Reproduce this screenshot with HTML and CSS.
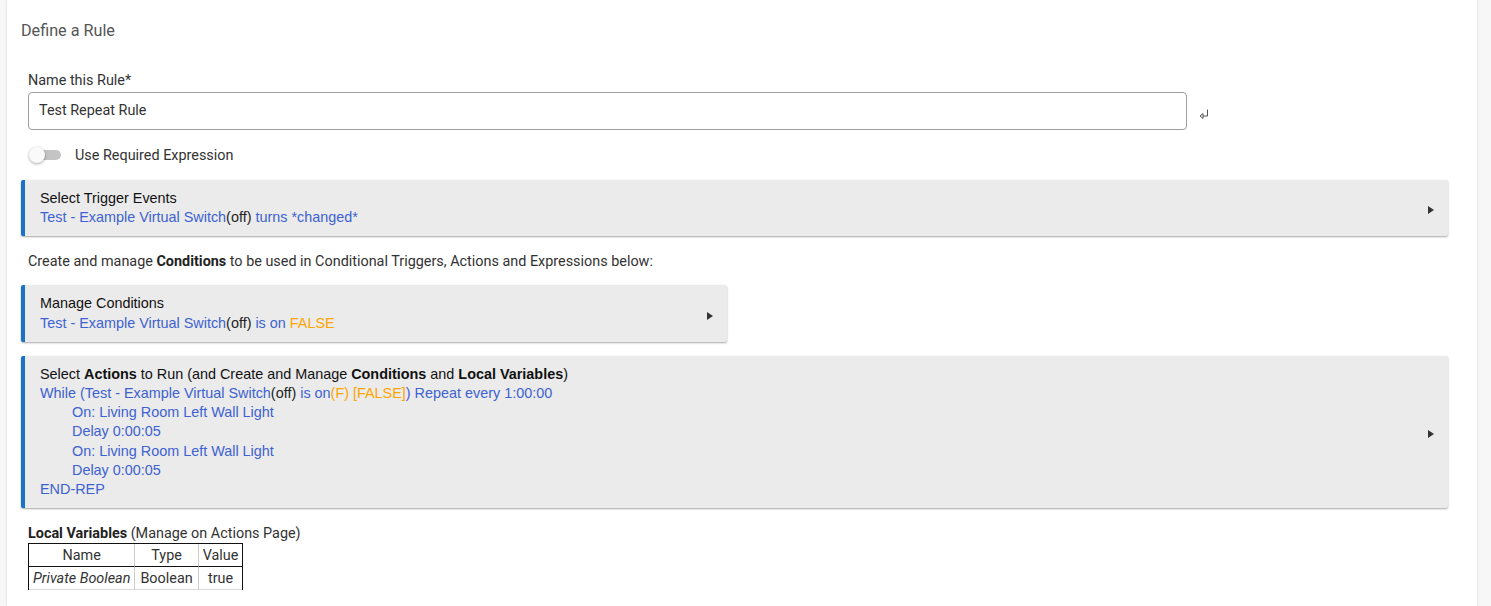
FILE: index.html
```html
<!DOCTYPE html>
<html>
<head>
<meta charset="utf-8">
<link rel="stylesheet" href="styles.css">
</head>
<body>
<div class="page">
  <div class="panel">
    <h2 class="title">Define a Rule</h2>

    <div class="field">
      <label class="label">Name this Rule*</label>
      <div class="input-row">
        <div class="input">Test Repeat Rule</div>
        <span class="enter">
          <svg width="12" height="12" viewBox="0 0 12 12"><path d="M9.5 1.5 V8 H5" fill="none" stroke="#555" stroke-width="1"/><path d="M5 5.5 L2 8 L5 10.5 Z" fill="none" stroke="#555" stroke-width="1"/></svg>
        </span>
      </div>
    </div>

    <div class="toggle-row">
      <span class="toggle"><span class="knob"></span></span>
      <span class="toggle-label">Use Required Expression</span>
    </div>

    <div class="section">
      <div class="section-text">
        <div class="head">Select Trigger Events</div>
        <div class="blue">Test - Example Virtual Switch<span class="dark">(off)</span> turns *changed*</div>
      </div>
      <span class="caret"></span>
    </div>

    <p class="note">Create and manage <b>Conditions</b> to be used in Conditional Triggers, Actions and Expressions below:</p>

    <div class="section narrow">
      <div class="section-text">
        <div class="head">Manage Conditions</div>
        <div class="blue">Test - Example Virtual Switch<span class="dark">(off)</span> is on <span class="orange">FALSE</span></div>
      </div>
      <span class="caret"></span>
    </div>

    <div class="section last">
      <div class="section-text">
        <div class="head">Select <b>Actions</b> to Run (and Create and Manage <b>Conditions</b> and <b>Local Variables</b>)</div>
        <div class="blue">While (Test - Example Virtual Switch<span class="dark">(off)</span> is on<span class="orange">(F) [FALSE]</span>) Repeat every 1:00:00</div>
        <div class="blue indent">On: Living Room Left Wall Light</div>
        <div class="blue indent">Delay 0:00:05</div>
        <div class="blue indent">On: Living Room Left Wall Light</div>
        <div class="blue indent">Delay 0:00:05</div>
        <div class="blue">END-REP</div>
      </div>
      <span class="caret"></span>
    </div>

    <div class="vars">
      <div class="vars-title"><b>Local Variables</b> (Manage on Actions Page)</div>
      <table class="vars-table">
        <tr><th>Name</th><th>Type</th><th>Value</th></tr>
        <tr><td><i>Private Boolean</i></td><td>Boolean</td><td>true</td></tr>
      </table>
    </div>
  </div>
</div>
</body>
</html>
```

FILE: styles.css
```css
html, body {
  margin: 0;
  padding: 0;
  height: 100%;
  overflow: hidden;
  background: #f7f7f7;
  font-family: Roboto, "Liberation Sans", sans-serif;
}

.page {
  display: flex;
  padding-left: 7px;
  height: 606px;
}

.panel {
  width: 1470px;
  box-sizing: border-box;
  background: #fff;
  padding: 21px 29px 0 14px;
  box-shadow: 0 0 2px rgba(0, 0, 0, 0.18);
}

.title {
  margin: 0;
  font-size: 16.2px;
  font-weight: 400;
  line-height: 20px;
  color: #555;
}

.field {
  margin: 31px 0 0 7px;
}

.label {
  display: block;
  font-size: 14.4px;
  line-height: 17px;
  color: #333;
}

.input-row {
  display: flex;
  align-items: center;
  margin-top: 3px;
}

.input {
  width: 1159px;
  height: 38px;
  box-sizing: border-box;
  border: 1px solid #9e9e9e;
  border-radius: 4px;
  padding: 0 10px;
  font-size: 14.4px;
  line-height: 36px;
  color: #333;
}

.enter {
  display: flex;
  margin: 6px 0 0 11px;
}

.toggle-row {
  display: flex;
  align-items: center;
  margin: 15px 0 0 9px;
  height: 20px;
}

.toggle {
  position: relative;
  width: 31px;
  height: 10px;
  border-radius: 5px;
  background: #c4c4c4;
}

.knob {
  position: absolute;
  left: -1px;
  top: -3px;
  width: 16px;
  height: 16px;
  border-radius: 50%;
  background: #fafafa;
  box-shadow: 0 1px 3px rgba(0, 0, 0, 0.35);
}

.toggle-label {
  margin-left: 14px;
  font-size: 14.4px;
  color: #333;
}

.section {
  display: flex;
  align-items: center;
  justify-content: space-between;
  margin-top: 15px;
  background: #ebebeb;
  border-left: 4px solid #1a73c8;
  border-radius: 2px;
  padding: 9px 14px 9px 15px;
  box-shadow: 0 1px 2px rgba(0, 0, 0, 0.35);
  font-family: "Liberation Sans", Arial, sans-serif;
  font-size: 14.4px;
  line-height: 19.2px;
}

.section.narrow {
  width: 706px;
  box-sizing: border-box;
  margin-top: 13px;
}

.section.last {
  margin-top: 14px;
}

.head {
  color: #111;
}

.blue {
  color: #3d62d2;
}

.dark {
  color: #222;
}

.orange {
  color: #ffa500;
}

.indent {
  padding-left: 32px;
}

.caret {
  width: 0;
  height: 0;
  border-top: 4px solid transparent;
  border-bottom: 4px solid transparent;
  border-left: 6px solid #333;
  margin-top: 4px;
}

.note {
  margin: 16px 0 0 7px;
  font-size: 14.4px;
  line-height: 20px;
  color: #333;
}

.note b {
  font-weight: 700;
  color: #222;
}

.vars {
  margin: 17px 0 0 7px;
  font-size: 14.4px;
  color: #333;
}

.vars-title {
  line-height: 18px;
}

.vars-title b {
  color: #222;
}

.vars-table {
  margin-top: 0;
  border-collapse: separate;
  border-spacing: 0;
  border: 1px solid #111;
  border-bottom: none;
  font-size: 14.4px;
  color: #333;
}

.vars-table th,
.vars-table td {
  padding: 0 5px;
  text-align: center;
  font-weight: 400;
  border-right: 1px solid #ccc;
}

.vars-table th:first-child,
.vars-table td:first-child {
  padding: 0 4px;
}

.vars-table th:last-child,
.vars-table td:last-child {
  padding: 0 4px;
  border-right: none;
}

.vars-table th {
  height: 22px;
  border-bottom: 1px solid #111;
}

.vars-table td {
  height: 22px;
  border-bottom: 1px solid #ddd;
}
```
